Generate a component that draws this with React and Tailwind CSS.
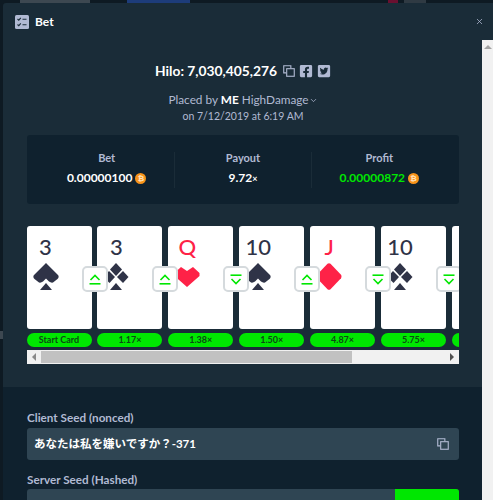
import React from 'react';
import { ChevronDown, X } from 'lucide-react';
import { FaFacebookSquare, FaTwitterSquare } from 'react-icons/fa';

const font = { fontFamily: 'Lato, "Noto Sans CJK JP", sans-serif' };

const CopyIcon = ({ size = 13 }) => (
  <svg width={size} height={size} viewBox="0 0 13 13" fill="none" stroke="currentColor" strokeWidth="1.2">
    <path d="M8.5 3.5V.8H.8v7.7h2.7" />
    <rect x="4" y="4" width="8.2" height="8.2" />
  </svg>
);

const Coin = () => (
  <span className="w-[11px] h-[11px] rounded-full bg-[#f7931a] inline-flex items-center justify-center text-[8px] leading-none font-bold text-[#ffe2bd]">₿</span>
);

const Spade = ({ color }) => (
  <svg width="26" height="27" viewBox="0 0 26 27" fill={color}>
    <path d="M13 0 L25 12 Q26.5 14 24.5 16 L20 19.5 Q18 20 16 18.5 L13 15.5 L10 18.5 Q8 20 6 19.5 L1.500 16 Q-.5 14 1 12 Z" />
    <path d="M13 20 L19 27 H7 Z" />
  </svg>
);

const Club = ({ color }) => (
  <svg width="26" height="27" viewBox="0 0 26 27" fill={color}>
    <path d="M13 0 L19 6.500 L13 13 L7 6.500 Z" />
    <path d="M6 8 L12 14 L6.500 20 L.5 14 Z" />
    <path d="M20 8 L25.500 14 L20 20 L14 14 Z" />
    <path d="M13 20 L19 27 H7 Z" />
  </svg>
);

const Heart = ({ color }) => (
  <svg width="26" height="27" viewBox="0 0 26 27" fill={color}>
    <path d="M7 4 L13 8 L19 4 L25.500 10 V13 L13 24 L.5 13 V10 Z" />
  </svg>
);

const Diamond = ({ color }) => (
  <svg width="26" height="27" viewBox="0 0 26 27" fill={color}>
    <path d="M11.500 .8 Q13 -.4 14.500 .8 L25 11.800 Q26 13.500 25 15.200 L14.500 26.200 Q13 27.400 11.500 26.200 L1 15.200 Q0 13.500 1 11.800 Z" />
  </svg>
);

const ArrowUp = () => (
  <svg width="12" height="11" viewBox="0 0 12 11" fill="none" stroke="#00e701" strokeWidth="1.6">
    <path d="M1.500 6 L6 1.500 L10.500 6" />
    <path d="M.5 9.800 H11.500" />
  </svg>
);

const ArrowDown = () => (
  <svg width="12" height="11" viewBox="0 0 12 11" fill="none" stroke="#00e701" strokeWidth="1.6">
    <path d="M.5 1.200 H11.500" />
    <path d="M1.500 5 L6 9.500 L10.500 5" />
  </svg>
);

const cards = [
  { rank: '3', suit: Spade, color: '#2f3347', arrow: 'up', label: 'Start Card' },
  { rank: '3', suit: Club, color: '#2f3347', arrow: 'up', label: '1.17×' },
  { rank: 'Q', suit: Heart, color: '#fe2247', arrow: 'down', label: '1.38×' },
  { rank: '10', suit: Spade, color: '#2f3347', arrow: 'up', label: '1.50×' },
  { rank: 'J', suit: Diamond, color: '#fe2247', arrow: 'down', label: '4.87×' },
  { rank: '10', suit: Club, color: '#2f3347', arrow: 'down', label: '5.75×' },
  { rank: '', suit: null, color: '#2f3347', arrow: null, label: '' },
];

const Card = ({ card }) => {
  const Suit = card.suit;
  return (
    <div className="w-[65px] shrink-0 flex flex-col gap-1">
      <div className="relative h-[103px] bg-white rounded-[3px] pl-[6px] pt-[7px]">
        <div className="w-[26px] flex flex-col items-center">
          <span className="text-[22px] leading-[27px] font-medium whitespace-nowrap" style={{ color: card.color }}>{card.rank}</span>
          <div className="mt-[3px]">{Suit && <Suit color={card.color} />}</div>
        </div>
        {card.arrow && (
          <div className="absolute left-[55px] top-[40px] z-10 w-[26px] h-[26px] bg-white border-2 border-[#d5dadd] rounded-[5px] flex items-center justify-center">
            {card.arrow === 'up' ? <ArrowUp /> : <ArrowDown />}
          </div>
        )}
      </div>
      <div className="h-[14px] bg-[#00e701] rounded-full text-[9px] leading-[14px] font-bold text-[#0b4a14] text-center">{card.label}</div>
    </div>
  );
};

const Stat = ({ label, children }) => (
  <div className="flex-1 flex flex-col items-center gap-[6px] -mt-[3px]">
    <span className="text-[11px] leading-[14px] font-bold text-[#b1bad3]">{label}</span>
    <div className="flex items-center gap-[3px] text-[12px] leading-[14px] font-bold">{children}</div>
  </div>
);

export default function App() {
  return (
    <div className="w-[493px] h-[500px] overflow-hidden bg-[#0e1a23] flex flex-col text-white" style={font}>
      {/* page behind the modal, only a sliver shows */}
      <div className="h-[3px] shrink-0 flex overflow-hidden">
        <div className="w-[20px]" />
        <div className="w-[70px] bg-[#3d4851]" />
        <div className="w-[37px]" />
        <div className="w-[63px] bg-[#1d3c7a]" />
        <div className="w-[198px]" />
        <div className="w-[10px] bg-[#6a1030]" />
        <div className="w-[6px]" />
        <div className="w-[22px] bg-[#2f3a43]" />
      </div>
      <div className="flex-1 min-h-0 flex">
        <div className="w-[3px] shrink-0 pt-[328px]">
          <div className="h-[8px] bg-[#3d4851]" />
        </div>
        <div className="flex-1 min-w-0 flex flex-col bg-[#1a2c38] rounded-tl-[3px]">
          <div className="h-[37px] shrink-0 flex items-center justify-between pl-3 pr-[9px]">
            <div className="flex items-center gap-[6px]">
              <svg width="14" height="14" viewBox="0 0 14 14">
                <rect width="14" height="14" rx="1.500" fill="#b1bad3" />
                <path d="M2.500 4 L3.800 5.200 L5.800 2.800 M2.500 9.500 L3.800 10.700 L5.800 8.300 M7.500 4.200 H11.500 M7.500 9.700 H11.500" fill="none" stroke="#1a2c38" strokeWidth="1.100" />
              </svg>
              <span className="text-[12px] font-bold leading-none">Bet</span>
            </div>
            <X size={9} strokeWidth={2} className="text-[#b1bad3]" />
          </div>

          <div className="flex-1 min-h-0 flex">
            <div className="flex-1 min-w-0 flex flex-col">
              <div className="h-[347px] shrink-0 pl-6 pr-[23px] pt-[22px] flex flex-col">
                <div className="flex items-center justify-center gap-[4px] h-[18px]">
                  <span className="text-[13.8px] font-bold leading-none">Hilo: 7,030,405,276</span>
                  <span className="ml-[2px] text-[#b1bad3]"><CopyIcon size={12} /></span>
                  <FaFacebookSquare size={14} className="text-[#b1bad3]" />
                  <FaTwitterSquare size={14} className="text-[#b1bad3]" />
                </div>
                <div className="mt-[12px] text-center leading-[16px] text-[#b1bad3]">
                  <div className="flex items-center justify-center text-[11.800px]">
                    Placed by&nbsp;<b className="text-white">ME</b>&nbsp;HighDamage
                    <ChevronDown size={9} />
                  </div>
                  <div className="text-[10.500px]">on 7/12/2019 at 6:19 AM</div>
                </div>

                <div className="mt-[11px] h-[69px] shrink-0 bg-[#0f212e] rounded-[3px] flex items-center px-3">
                  <Stat label="Bet">0.00000100 <Coin /></Stat>
                  <div className="w-px h-[36px] bg-[#1a2c38]" />
                  <Stat label="Payout"><span>9.72<span className="text-[9px]">×</span></span></Stat>
                  <div className="w-px h-[36px] bg-[#1a2c38]" />
                  <Stat label="Profit"><span className="text-[#00e701]">0.00000872</span> <Coin /></Stat>
                </div>

                <div className="mt-[22px] overflow-hidden">
                  <div className="flex gap-[5.900px] -ml-[0.5px]">
                    {cards.map((card, idx) => <Card key={idx} card={card} />)}
                  </div>
                  <div className="mt-[3px] h-[14px] bg-[#f1f1f1] flex items-center">
                    <span className="w-[14px] flex justify-center">
                      <span className="border-y-[4px] border-y-transparent border-r-[4px] border-r-[#8a8a8a]" />
                    </span>
                    <div className="w-[311px] h-[12px] bg-[#c1c1c1]" />
                    <div className="flex-1" />
                    <span className="w-[14px] flex justify-center">
                      <span className="border-y-[4px] border-y-transparent border-l-[4px] border-l-[#505050]" />
                    </span>
                  </div>
                </div>
              </div>

              <div className="flex-1 bg-[#0f212e] pl-6 pr-[23px] pt-[23px]">
                <div className="text-[11.700px] leading-[14px] font-bold text-[#b1bad3]">Client Seed (nonced)</div>
                <div className="mt-[4px] h-[32px] bg-[#2f4553] rounded-[3px] flex items-center justify-between pl-[7px] pr-[10px]">
                  <span className="text-[11.500px] font-bold">あなたは私を嫌いですか？-371</span>
                  <span className="text-[#b1bad3]"><CopyIcon size={12} /></span>
                </div>
                <div className="mt-[12px] text-[11.700px] leading-[14px] font-bold text-[#b1bad3]">Server Seed (Hashed)</div>
                <div className="mt-[3px] h-[32px] bg-[#2f4553] rounded-[3px] flex justify-end overflow-hidden">
                  <div className="w-[64px] bg-[#00e701]" />
                </div>
              </div>
            </div>
            <div className="w-[11px] shrink-0 bg-[#f1f1f1] flex justify-center pt-[5px]">
              <span className="h-0 border-x-[4px] border-x-transparent border-b-[4px] border-b-[#a3a3a3]" />
            </div>
          </div>
        </div>
      </div>
    </div>
  );
}
